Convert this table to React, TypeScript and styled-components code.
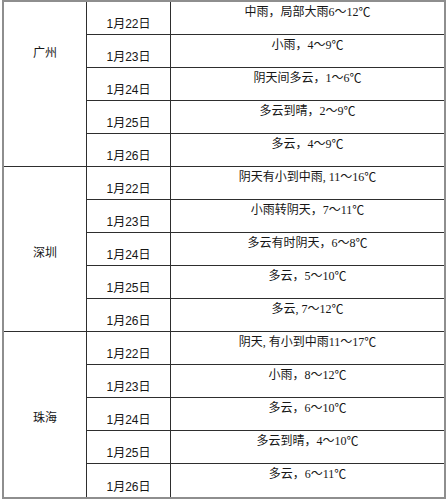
import React from 'react'
import styled, { createGlobalStyle } from 'styled-components'

const GlobalStyle = createGlobalStyle`
  html, body {
    margin: 0;
    padding: 0;
    background: #ffffff;
    overflow: hidden;
  }
`

type Day = { date: string; weather: string }
type City = { name: string; lift?: number; days: Day[] }

const cities: City[] = [
  {
    name: '广州',
    lift: 64,
    days: [
      { date: '1月22日', weather: '中雨，局部大雨6～12' },
      { date: '1月23日', weather: '小雨，4～9' },
      { date: '1月24日', weather: '阴天间多云，1～6' },
      { date: '1月25日', weather: '多云到晴，2～9' },
      { date: '1月26日', weather: '多云，4～9' },
    ],
  },
  {
    name: '深圳',
    days: [
      { date: '1月22日', weather: '阴天有小到中雨, 11～16' },
      { date: '1月23日', weather: '小雨转阴天，7～11' },
      { date: '1月24日', weather: '多云有时阴天，6～8' },
      { date: '1月25日', weather: '多云，5～10' },
      { date: '1月26日', weather: '多云, 7～12' },
    ],
  },
  {
    name: '珠海',
    days: [
      { date: '1月22日', weather: '阴天, 有小到中雨11～17' },
      { date: '1月23日', weather: '小雨，8～12' },
      { date: '1月24日', weather: '多云，6～10' },
      { date: '1月25日', weather: '多云到晴，4～10' },
      { date: '1月26日', weather: '多云，6～11' },
    ],
  },
]

const Sheet = styled.div`
  margin-left: 2px;
  width: 444px;
  box-sizing: border-box;
  display: grid;
  grid-template-columns: 83px 84px 273px;
  grid-template-rows: repeat(15, 33px);
  border: 2px solid #8e8e8e;
  color: #161616;
  font-size: 12px;
  line-height: 16px;
`

const CityCell = styled.div<{ $row: number; $lift?: number; $last?: boolean }>`
  grid-column: 1;
  grid-row: ${p => p.$row} / span 5;
  box-sizing: border-box;
  display: flex;
  align-items: center;
  justify-content: center;
  border-right: 1px solid #2e2e2e;
  border-bottom: ${p => (p.$last ? 'none' : '1px solid #2e2e2e')};
  padding-top: ${p => (p.$lift ? 0 : 5)}px;
  padding-bottom: ${p => p.$lift ?? 0}px;
  font-family: 'Noto Sans CJK SC', sans-serif;
`

const DateCell = styled.div<{ $row: number; $last?: boolean }>`
  grid-column: 2;
  grid-row: ${p => p.$row};
  box-sizing: border-box;
  display: flex;
  align-items: flex-end;
  justify-content: center;
  padding-bottom: 2px;
  border-right: 1px solid #2e2e2e;
  border-bottom: ${p => (p.$last ? 'none' : '1px solid #2e2e2e')};
  font-family: 'Liberation Sans', 'Noto Sans CJK SC', sans-serif;
`

const WeatherCell = styled.div<{ $row: number; $last?: boolean }>`
  grid-column: 3;
  grid-row: ${p => p.$row};
  box-sizing: border-box;
  display: flex;
  align-items: flex-start;
  justify-content: center;
  padding-top: 2px;
  border-bottom: ${p => (p.$last ? 'none' : '1px solid #2e2e2e')};
  font-family: 'Liberation Serif', 'Noto Sans CJK SC', serif;
  white-space: nowrap;
`

const Unit = styled.span`
  font-family: 'Noto Sans CJK SC', sans-serif;
`

const App = () => {
  return (
    <>
      <GlobalStyle />
      <Sheet>
        {cities.map((city, ci) => {
          const start = ci * 5 + 1
          const lastCity = ci === cities.length - 1
          return (
            <React.Fragment key={city.name}>
              <CityCell $row={start} $lift={city.lift} $last={lastCity}>
                {city.name}
              </CityCell>
              {city.days.map((day, di) => {
                const last = lastCity && di === city.days.length - 1
                return (
                  <React.Fragment key={day.date}>
                    <DateCell $row={start + di} $last={last}>{day.date}</DateCell>
                    <WeatherCell $row={start + di} $last={last}>
                      {day.weather}<Unit>℃</Unit>
                    </WeatherCell>
                  </React.Fragment>
                )
              })}
            </React.Fragment>
          )
        })}
      </Sheet>
    </>
  )
}

export default App
